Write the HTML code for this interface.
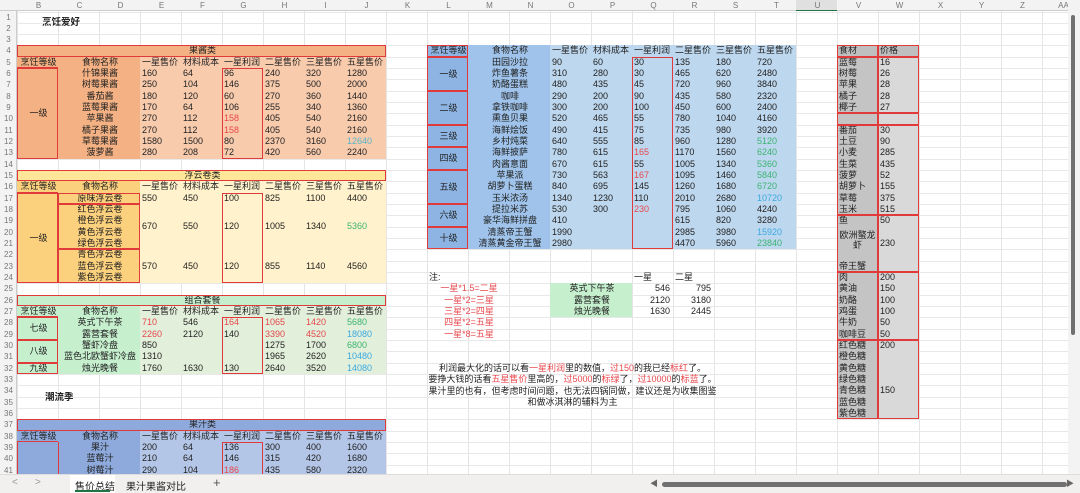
<!DOCTYPE html>
<html><head><meta charset="utf-8">
<style>
*{margin:0;padding:0;box-sizing:border-box}
body{width:1080px;height:493px;overflow:hidden;background:#fff;position:relative;font-family:"Liberation Sans","Noto Sans CJK SC",sans-serif;font-size:9px;color:#222}
.c{position:absolute;overflow:hidden;white-space:nowrap;line-height:11.33px;padding-left:2px}
.g{position:absolute}
#tabs{position:absolute;left:0;top:474px;width:1080px;height:19px;background:#f2f0ee;border-top:1px solid #ddd}
</style></head><body>
<div id="root"></div>
<div id="tabs">
 <span style="position:absolute;left:12px;top:2px;color:#999;font-size:10px">&lt;</span>
 <span style="position:absolute;left:35px;top:2px;color:#999;font-size:10px">&gt;</span>
 <div style="position:absolute;left:70px;top:0;width:45px;height:18px;background:#fff"></div>
 <span style="position:absolute;left:75px;top:3px;font-size:10px;color:#222">售价总结</span>
 <div style="position:absolute;left:75px;top:15px;width:35px;height:1.5px;background:#217346"></div>
 <span style="position:absolute;left:126px;top:3px;font-size:10px;color:#222">果汁果酱对比</span>
 <span style="position:absolute;left:213px;top:0px;font-size:13px;color:#555">+</span>
 <div style="position:absolute;left:662px;top:7px;width:405px;height:5px;border-radius:3px;background:#707070"></div>
 <span style="position:absolute;left:650px;top:3px;font-size:8px;color:#666">◀</span>
 <span style="position:absolute;left:1066px;top:3px;font-size:8px;color:#666">▶</span>
</div>
<script>
var R=document.getElementById('root'),H='';
function X(i){return 17+i*41}
function Y(r){return 11.5+(r-1)*11.333}
function box(x,y,w,h,st){H+='<div class="g" style="left:'+x+'px;top:'+y+'px;width:'+w+'px;height:'+h+'px;'+(st||'')+'"></div>'}
function cell(c,r,cs,rs,t,st){H+='<div class="c" style="left:'+X(c)+'px;top:'+Y(r)+'px;width:'+(cs*41)+'px;height:'+(rs*11.333)+'px;'+(rs>1?'line-height:'+(rs*11.333)+'px;':'')+(st||'')+'">'+t+'</div>'}
function rbox(c,r,cs,rs){box(X(c),Y(r),cs*41,rs*11.333,'border:1.3px solid #e03a3a')}
// gridlines
for(var i=0;i<27;i++)box(X(i),11,1,463,'background:#e4e4e4');
for(var r=1;r<=42;r++)box(0,Y(r),1068,1,'background:#e8e8e8');
// headers
box(0,0,1068,11,'background:#f3f3f3;border-bottom:1px solid #ccc');
box(0,11,17,463,'background:#f3f3f3;border-right:1px solid #ccc');
var L='BCDEFGHIJKLMNOPQRSTUVWXYZ'.split('');L.push('AA');
L.forEach(function(l,i){H+='<div class="c" style="left:'+X(i)+'px;top:0;width:41px;height:11px;line-height:11px;text-align:center;color:#777;font-size:8px;'+(l=='U'?'background:#e0e0e0;border-bottom:1.5px solid #217346;':'')+'">'+l+'</div>'});
for(var r=1;r<=41;r++)H+='<div class="c" style="left:0;top:'+Y(r)+'px;width:17px;text-align:center;padding:0;color:#777;font-size:8px">'+r+'</div>';
var RED='color:#e8474c',GRN='color:#3cb371',BLU='color:#3aa9e0';
function table(top,title,tb,dark,light,rows){
 // title
 cell(0,top,9,1,title,'background:'+tb+';text-align:center');
 box(X(0),Y(top),369,11.33,'border:1.3px solid #e03a3a');
 var hd=['烹饪等级','食物名称','','一星售价','材料成本','一星利润','二星售价','三星售价','五星售价'];
 cell(0,top+1,1,1,'烹饪等级','background:'+dark+';text-align:center;border-bottom:1.3px solid #e03a3a');
 cell(1,top+1,2,1,'食物名称','background:'+dark+';text-align:center');
 for(var k=3;k<9;k++)cell(k,top+1,1,1,hd[k],'background:'+light+';');
}
function vals(c,r,arr){arr.forEach(function(v,i){if(v===null)return;var t=v,s='';if(typeof v=='object'){t=v[0];s=v[1]}cell(c+i,r,1,1,t,s)})}
// 果酱
table(4,'果酱类','#f4b183','#f4b183','#f8cbad');
box(X(0),Y(6),123,8*11.333,'background:#f4b183');
box(X(3),Y(6),246,8*11.333,'background:#f8cbad');
cell(0,6,1,8,'一级','text-align:center');rbox(0,6,1,8);
var jam=[['什锦果酱',160,64,96,240,320,1280],['树莓果酱',250,104,146,375,500,2000],['番茄酱',180,120,60,270,360,1440],['蓝莓果酱',170,64,106,255,340,1360],['苹果酱',270,112,[158,RED],405,540,2160],['橘子果酱',270,112,[158,RED],405,540,2160],['草莓果酱',1580,1500,80,2370,3160,[12640,'color:#5ab4c8']],['菠萝酱',280,208,72,420,560,2240]];
jam.forEach(function(a,i){cell(1,6+i,2,1,a[0],'text-align:center');vals(3,6+i,a.slice(1))});
rbox(5,6,1,8);
// 浮云卷
table(15,'浮云卷类','#ffe699','#fcd17d','#fff2cc');
box(X(0),Y(17),123,8*11.333,'background:#fcd17d');
box(X(3),Y(17),246,8*11.333,'background:#fff2cc');
cell(0,17,1,8,'一级','text-align:center');rbox(0,17,1,8);
cell(1,17,2,1,'原味浮云卷','text-align:center');rbox(1,17,2,1);
['红色浮云卷','橙色浮云卷','黄色浮云卷','绿色浮云卷'].forEach(function(n,i){cell(1,18+i,2,1,n,'text-align:center')});rbox(1,18,2,4);
['青色浮云卷','蓝色浮云卷','紫色浮云卷'].forEach(function(n,i){cell(1,22+i,2,1,n,'text-align:center')});rbox(1,22,2,3);
vals(3,17,[550,450,100,825,1100,4400]);
[[670,550,120,1005,1340,[5360,GRN]]].forEach(function(a){a.forEach(function(v,i){var t=v,s='';if(typeof v=='object'){t=v[0];s=v[1]}cell(3+i,18,1,4,t,s)})});
[570,450,120,855,1140,4560].forEach(function(v,i){cell(3+i,22,1,3,v)});
rbox(5,17,1,8);
// 组合套餐
table(26,'组合套餐','#c6efce','#c6efce','#e2efda');
box(X(0),Y(28),123,5*11.333,'background:#c6efce');
box(X(3),Y(28),246,5*11.333,'background:#e2efda');
cell(0,28,1,2,'七级','text-align:center');rbox(0,28,1,2);
cell(0,30,1,2,'八级','text-align:center');rbox(0,30,1,2);
cell(0,32,1,1,'九级','text-align:center');rbox(0,32,1,1);
var set=[['英式下午茶',[710,RED],546,[164,RED],[1065,RED],[1420,RED],[5680,GRN]],['露营套餐',[2260,RED],2120,140,[3390,RED],[4520,RED],[18080,BLU]],['蟹虾冷盘',850,null,null,1275,1700,[6800,GRN]],['蓝色北欧蟹虾冷盘',1310,null,null,1965,2620,[10480,BLU]],['烛光晚餐',1760,1630,130,2640,3520,[14080,BLU]]];
set.forEach(function(a,i){cell(1,28+i,2,1,a[0],'text-align:center');vals(3,28+i,a.slice(1))});
rbox(5,28,1,5);
// titles
H+='<div class="c" style="left:40px;top:17px;font-weight:bold;font-size:9.5px">烹饪爱好</div>';
H+='<div class="c" style="left:43px;top:392px;font-weight:bold;font-size:9.5px">潮流季</div>';
// 果汁
table(37,'果汁类','#8ea9db','#8ea9db','#b4c6e7');
box(X(0),Y(39),123,36,'background:#8ea9db');
box(X(3),Y(39),246,36,'background:#b4c6e7');
box(X(0),Y(39),1.3,36,'background:#e03a3a');box(X(1),Y(39),1.3,36,'background:#e03a3a');
[['果汁',200,64,136,300,400,1600],['蓝莓汁',210,64,146,315,420,1680],['树莓汁',290,104,[186,RED],435,580,2320]].forEach(function(a,i){cell(1,39+i,2,1,a[0],'text-align:center');vals(3,39+i,a.slice(1))});
box(X(5),Y(39),41,36,'border:1.3px solid #e03a3a;border-bottom:none');
// middle table (cols K=9 .. ; L=10)
box(X(10),Y(4),369,18*11.333,'background:#bdd7ee');
box(X(10),Y(4),41,18*11.333,'background:#8db4e2');
box(X(11),Y(4),82,18*11.333,'background:#9fc3ea');
cell(10,4,1,1,'烹饪等级','text-align:center');rbox(10,4,1,1);
cell(11,4,2,1,'食物名称','text-align:center');
['一星售价','材料成本','一星利润','二星售价','三星售价','五星售价'].forEach(function(t,i){cell(13+i,4,1,1,t)});
[['一级',5,3],['二级',8,3],['三级',11,2],['四级',13,2],['五级',15,3],['六级',18,2],['十级',20,2]].forEach(function(a){cell(10,a[1],1,a[2],a[0],'text-align:center');rbox(10,a[1],1,a[2])});
var mid=[['田园沙拉',90,60,30,135,180,720],['炸鱼薯条',310,280,30,465,620,2480],['奶酪蛋糕',480,435,45,720,960,3840],['咖啡',290,200,90,435,580,2320],['拿铁咖啡',300,200,100,450,600,2400],['熏鱼贝果',520,465,55,780,1040,4160],['海鲜烩饭',490,415,75,735,980,3920],['乡村炖菜',640,555,85,960,1280,[5120,GRN]],['海鲜披萨',780,615,[165,RED],1170,1560,[6240,GRN]],['肉酱意面',670,615,55,1005,1340,[5360,GRN]],['苹果派',730,563,[167,RED],1095,1460,[5840,GRN]],['胡萝卜蛋糕',840,695,145,1260,1680,[6720,GRN]],['玉米浓汤',1340,1230,110,2010,2680,[10720,BLU]],['提拉米苏',530,300,[230,RED],795,1060,4240],['豪华海鲜拼盘',410,null,null,615,820,3280],['清蒸帝王蟹',1990,null,null,2985,3980,[15920,BLU]],['清蒸黄金帝王蟹',2980,null,null,4470,5960,[23840,GRN]]];
mid.forEach(function(a,i){cell(11,5+i,2,1,a[0],'text-align:center');vals(13,5+i,a.slice(1))});
rbox(15,5,1,17);
// notes
cell(10,24,1,1,'注:');
['一星*1.5=二星','一星*2=三星','三星*2=四星','四星*2=五星','一星*8=五星'].forEach(function(t,i){cell(10,25+i,2,1,t,RED+';text-align:center')});
box(X(13),Y(25),82,34,'background:#c6efce');
['英式下午茶','露营套餐','烛光晚餐'].forEach(function(t,i){cell(13,25+i,2,1,t,'text-align:center')});
cell(15,24,1,1,'一星');cell(16,24,1,1,'二星');
[[546,795],[2120,3180],[1630,2445]].forEach(function(a,i){cell(15,25+i,1,1,a[0],'text-align:right;padding-right:3px');cell(16,25+i,1,1,a[1],'text-align:right;padding-right:3px')});
var P=[ '利润最大化的话可以看<span style="'+RED+'">一星利润</span>里的数值，<span style="'+RED+'">过150</span>的我已经<span style="'+RED+'">标红</span>了。',
'要挣大钱的话看<span style="'+RED+'">五星售价</span>里高的，<span style="'+RED+'">过5000</span>的<span style="'+RED+'">标绿</span>了，<span style="'+RED+'">过10000</span>的<span style="'+RED+'">标蓝</span>了。',
'果汁里的也有，但考虑时间问题，也无法四锅同做，建议还是为收集图鉴','和做冰淇淋的辅料为主'];
P.forEach(function(t,i){H+='<div class="c" style="left:420px;top:'+(363+i*11.4)+'px;width:305px;text-align:center;padding:0">'+t+'</div>'});
// right table V=20, W=21
box(X(20),Y(4),82,33*11.333,'background:#d9d9d9');
box(X(20),Y(4),41,33*11.333,'background:#c4c4c4');
box(X(20),Y(4),82,11.33,'background:#bfbfbf');
cell(20,4,1,1,'食材');cell(21,4,1,1,'价格');
var ing=[[5,'蓝莓',16],[6,'树莓',26],[7,'苹果',28],[8,'橘子',28],[9,'椰子',27],[11,'番茄',30],[12,'土豆',90],[13,'小麦',285],[14,'生菜',435],[15,'菠萝',52],[16,'胡萝卜',155],[17,'草莓',375],[18,'玉米',515],[19,'鱼',50],[23,'帝王蟹',''],[24,'肉',200],[25,'黄油',150],[26,'奶酪',100],[27,'鸡蛋',100],[28,'牛奶',50],[29,'咖啡豆',50],[30,'红色糖',200],[31,'橙色糖',''],[32,'黄色糖',''],[33,'绿色糖',''],[34,'青色糖',150],[35,'蓝色糖',''],[36,'紫色糖','']];
ing.forEach(function(a){cell(20,a[0],1,1,a[1]);cell(21,a[0],1,1,a[2])});
H+='<div class="c" style="left:'+X(20)+'px;top:'+(Y(20)+3)+'px;width:41px;text-align:center;line-height:10px;white-space:normal;padding:0">欧洲螯龙虾</div>';
cell(21,21,1,1,230);
[[4,1],[5,5],[10,1],[11,8],[19,5],[24,6],[30,7]].forEach(function(a){rbox(20,a[0],1,a[1]);rbox(21,a[0],1,a[1])});
// vertical scrollbar
box(1068,0,12,474,'background:#f3f3f3');
box(1071,15,4,320,'background:#707070;border-radius:2px');
R.innerHTML=H;
</script>
</body></html>
